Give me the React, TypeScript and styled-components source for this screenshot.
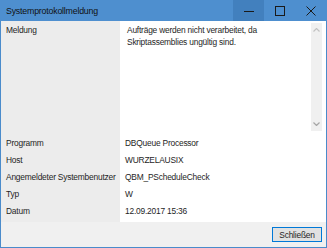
import styled, { createGlobalStyle } from 'styled-components';

const GlobalStyle = createGlobalStyle`
  html, body {
    margin: 0;
    padding: 0;
    background: #ffffff;
  }
  body {
    font-family: 'Liberation Sans', Arial, sans-serif;
    font-size: 8.4px;
    letter-spacing: -0.2px;
    color: #1e1e1e;
  }
`;

interface IRow {
  label: string;
  value: string;
}

const rows: IRow[] = [
  { label: 'Programm', value: 'DBQueue Processor' },
  { label: 'Host', value: 'WURZELAUSIX' },
  { label: 'Angemeldeter Systembenutzer', value: 'QBM_PScheduleCheck' },
  { label: 'Typ', value: 'W' },
  { label: 'Datum', value: '12.09.2017 15:36' },
];

function App() {
  return (
    <>
      <GlobalStyle />
      <Window>
        <TitleBar>
          <Title>Systemprotokollmeldung</Title>
          <Controls>
            <ControlButton active>
              <svg width="10" height="10" viewBox="0 0 10 10">
                <path d="M0 5.5h10" stroke="#1a1a1a" strokeWidth="1" />
              </svg>
            </ControlButton>
            <ControlButton>
              <svg width="10" height="10" viewBox="0 0 10 10">
                <rect x="0.5" y="0.5" width="9" height="9" fill="none" stroke="#1a1a1a" strokeWidth="1" />
              </svg>
            </ControlButton>
            <ControlButton>
              <svg width="10" height="10" viewBox="0 0 10 10">
                <path d="M0.5 0.5l9 9M9.5 0.5l-9 9" stroke="#1a1a1a" strokeWidth="1" />
              </svg>
            </ControlButton>
          </Controls>
        </TitleBar>

        <Body>
          <Label>Meldung</Label>
          <MessageCell>
            <MessageText>
              Aufträge werden nicht verarbeitet, da Skriptassemblies ungültig sind.
            </MessageText>
            <ScrollBar>
              <Arrow>
                <svg width="7" height="4" viewBox="0 0 7 4">
                  <path d="M0.5 3.5l3-3 3 3" stroke="#c2c2c2" fill="none" strokeWidth="1.2" />
                </svg>
              </Arrow>
              <Arrow>
                <svg width="7" height="4" viewBox="0 0 7 4">
                  <path d="M0.5 0.5l3 3 3-3" stroke="#a6a6a6" fill="none" strokeWidth="1.2" />
                </svg>
              </Arrow>
            </ScrollBar>
          </MessageCell>

          {rows.map((row, key) => (
            <Row key={key}>
              <Label>{row.label}</Label>
              <Value>{row.value}</Value>
            </Row>
          ))}
          <Row>
            <Label filler />
            <Value filler />
          </Row>
        </Body>

        <Footer>
          <CloseButton>Schließen</CloseButton>
        </Footer>
      </Window>
    </>
  );
}

export default App;

const Window = styled.div`
  width: 327px;
  height: 248px;
  box-sizing: border-box;
  border: 1px solid #4a8bcb;
  border-top: none;
  display: flex;
  flex-direction: column;
  background: #f0f0f0;
`;

const TitleBar = styled.div`
  height: 21px;
  margin: 0 -1px;
  background: #4e8fcf;
  display: flex;
  align-items: center;
  justify-content: space-between;
`;

const Title = styled.div`
  padding-left: 6px;
  font-size: 8.8px;
  color: #111;
  white-space: nowrap;
`;

const Controls = styled.div`
  display: flex;
  height: 100%;
  padding-right: 1px;
`;

const ControlButton = styled.div<{ active?: boolean }>`
  width: 31px;
  height: 100%;
  display: flex;
  align-items: center;
  justify-content: center;
  background: ${(p) => (p.active ? '#4280be' : 'transparent')};
`;

const Body = styled.div`
  display: grid;
  grid-template-columns: 119px 1fr;
  grid-template-rows: 113px repeat(5, 17px) 3px;
  background: #ffffff;
`;

const Row = styled.div`
  display: contents;
`;

const Label = styled.div<{ filler?: boolean }>`
  background: #ececec;
  padding: 3px 0 0 5px;
  line-height: 12px;
  white-space: nowrap;
  ${(p) => (p.filler ? 'padding: 0;' : '')}
`;

const Value = styled.div<{ filler?: boolean }>`
  background: #ffffff;
  padding: 3px 0 0 5px;
  line-height: 12px;
  white-space: nowrap;
  ${(p) => (p.filler ? 'padding: 0;' : '')}
`;

const MessageCell = styled.div`
  display: flex;
  justify-content: space-between;
  padding: 2px 4px 3px 7px;
`;

const MessageText = styled.div`
  width: 140px;
  padding-top: 1px;
  line-height: 12px;
`;

const ScrollBar = styled.div`
  width: 11px;
  background: #f0f0f0;
  display: flex;
  flex-direction: column;
  justify-content: space-between;
  align-items: center;
  padding: 5px 0;
`;

const Arrow = styled.div`
  display: flex;
`;

const Footer = styled.div`
  flex: 1;
  display: flex;
  justify-content: flex-end;
  align-items: center;
  padding-right: 4px;
  background: #f0f0f0;
`;

const CloseButton = styled.button`
  width: 50px;
  height: 15px;
  padding: 0;
  font-family: 'Liberation Sans', Arial, sans-serif;
  font-size: 8.4px;
  letter-spacing: -0.2px;
  color: #1e1e1e;
  background: #e1e1e1;
  border: 1px solid #0078d7;
  box-shadow: inset 0 0 0 1px #e1e1e1;
`;
